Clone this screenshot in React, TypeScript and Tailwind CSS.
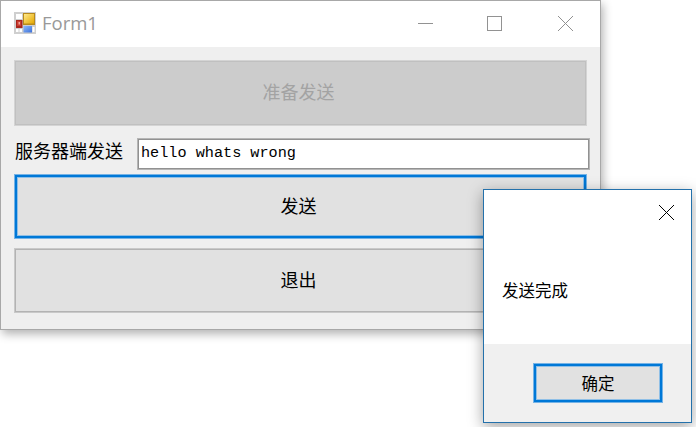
import React from "react";

const CJK = "font-['Noto_Sans_CJK_SC',sans-serif]";

function AppIcon() {
  return (
    <svg width="22" height="22" viewBox="0 0 22 22">
      <defs>
        <linearGradient id="gold" x1="0" y1="0" x2="1" y2="1">
          <stop offset="0" stopColor="#ffe98a" />
          <stop offset="1" stopColor="#e5a800" />
        </linearGradient>
        <linearGradient id="blue" x1="0" y1="0" x2="1" y2="1">
          <stop offset="0" stopColor="#8db9fb" />
          <stop offset="1" stopColor="#3c70d8" />
        </linearGradient>
      </defs>
      <rect x="0" y="0" width="22" height="22" fill="#cfcfcf" />
      <path d="M2 2h6v5H2zM2 17h2.500v3H2zM5.500 17h2.500v3H5.500zM18.500 15h2v5h-2z" fill="#fff" />
      <rect x="9" y="1" width="12" height="12" fill="#b88a1c" />
      <rect x="10" y="2" width="10" height="9.500" fill="url(#gold)" />
      <rect x="2" y="8" width="6.500" height="8" fill="#a9261d" />
      <rect x="3" y="9" width="4" height="5" fill="#cb3c30" />
      <rect x="4.500" y="10" width="1.500" height="2.500" fill="#f0a49c" />
      <rect x="9.500" y="14" width="8.500" height="6.500" fill="url(#blue)" />
    </svg>
  );
}

function Cross({ color }: { color: string }) {
  return (
    <svg width="15" height="15" viewBox="0 0 15 15" stroke={color} strokeWidth="1" fill="none">
      <path d="M0 0L15 15M15 0L0 15" />
    </svg>
  );
}

function MainWindow() {
  return (
    <div className="flex h-[330px] w-[601px] flex-col border border-[#a8a8a8] bg-[#efefef] shadow-[2px_4px_9px_rgba(0,0,0,0.3)]">
      <div className="flex h-[46px] shrink-0 items-start bg-white pl-[13px]">
        <div className="pt-[11px]"><AppIcon /></div>
        <div className="ml-[6px] mt-[8px] w-[66px] whitespace-nowrap font-['Open_Sans',sans-serif] text-[18.500px] leading-[28px] text-[#999999]">
          Form1
        </div>
        <div className="ml-auto mr-[27px] flex items-center gap-[55px] pt-[15px]">
          <div className="h-px w-[15px] bg-[#929292]" />
          <div className="-ml-[1px] h-[15px] w-[15px] border border-[#929292]" />
          <div className="ml-[1px]"><Cross color="#909090" /></div>
        </div>
      </div>
      <div className={`flex flex-col pl-[13px] text-[18px] text-black ${CJK}`}>
        <div className="mt-[13px] flex h-[66px] w-[573px] items-center justify-center border border-[#d4d4d4] bg-[#cccccc] pb-[3px] pr-[4px] text-[#a3a3a3] shadow-[inset_0_0_0_1px_#c0c0c0]">
          准备发送
        </div>
        <div className="mt-[12px] flex h-[32px]">
          <div className="w-[123px] whitespace-nowrap pl-px text-[18px] leading-[25px]">服务器端发送</div>
          <div className="flex h-[32px] w-[453px] items-center border border-[#b5b5b5] bg-white pb-[2px] pl-[3px] font-['Liberation_Mono',monospace] text-[15.200px] shadow-[inset_0_0_0_1px_#919191]">
            hello whats wrong
          </div>
        </div>
        <div className="mt-[4px] flex h-[65px] w-[573px] items-center justify-center border border-[#75b3e6] bg-[#e1e1e1] pb-[2px] pr-[4px] shadow-[inset_0_0_0_2px_#0078d7,inset_0_0_0_3px_#8fbfe6]">
          发送
        </div>
        <div className="mt-[9px] flex h-[65px] w-[573px] items-center justify-center border border-[#c9c9c9] bg-[#e1e1e1] pb-[3px] pr-[4px] shadow-[inset_0_0_0_1px_#b3b3b3]">
          退出
        </div>
      </div>
    </div>
  );
}

function MessageDialog() {
  return (
    <div className={`absolute left-[483px] top-[189px] flex h-[234px] w-[209px] flex-col border border-[#2471ab] bg-white text-[16.500px] text-black shadow-[0_4px_14px_rgba(0,0,0,0.36)] ${CJK}`}>
      <div className="flex justify-end pr-[17px] pt-[15px]"><Cross color="#000000" /></div>
      <div className="mt-[58px] pl-[18px] leading-[24px]">发送完成</div>
      <div className="mt-auto flex h-[78px] justify-end bg-[#f0f0f0] pr-[28px] pt-[19px]">
        <div className="flex h-[40px] w-[130px] items-center justify-center border border-[#75b3e6] bg-[#e1e1e1] shadow-[inset_0_0_0_2px_#0078d7,inset_0_0_0_3px_#8fbfe6]">
          确定
        </div>
      </div>
    </div>
  );
}

export default function App() {
  return (
    <div className="relative h-[427px] w-[696px] overflow-hidden bg-white">
      <MainWindow />
      <MessageDialog />
    </div>
  );
}
